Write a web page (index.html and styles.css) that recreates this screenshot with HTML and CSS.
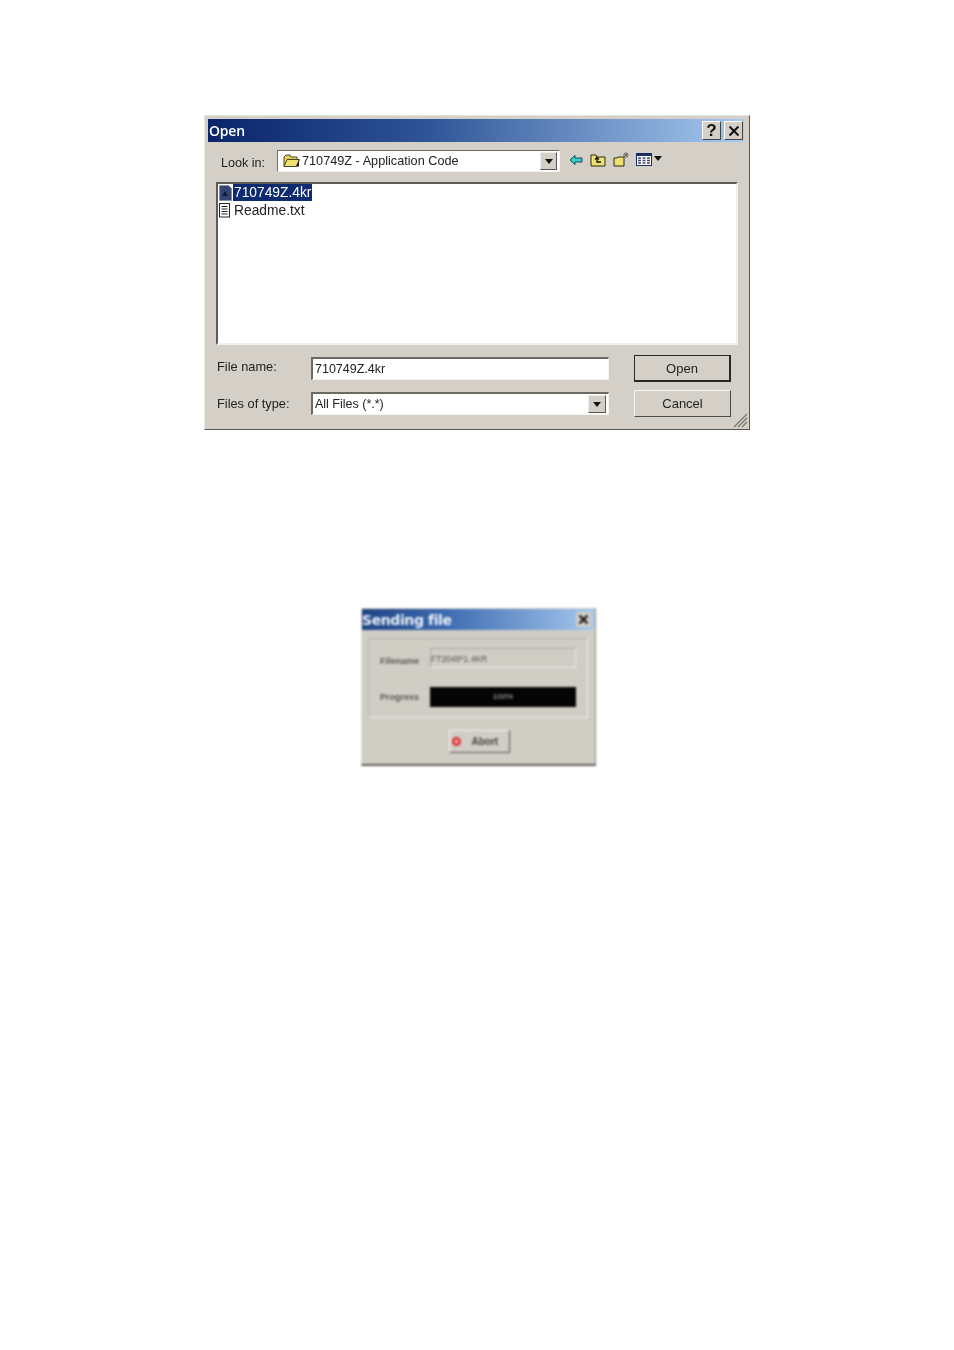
FILE: index.html
```html
<!DOCTYPE html>
<html lang="en">
<head>
<meta charset="utf-8">
<title>Open dialog</title>
<link rel="stylesheet" href="styles.css">
</head>
<body>
<main class="page">
  <section class="open">
    <header class="titlebar">
      <span class="title-text">Open</span>
      <span class="caption-btn q">?</span>
      <span class="caption-btn x"><svg width="12" height="12" viewBox="0 0 12 12"><path d="M1.500 1.500L10.500 10.500M10.500 1.500L1.500 10.500" stroke="#111" stroke-width="2"/></svg></span>
    </header>
    <div class="lookin">
      <span class="look-label">Look in:</span>
      <div class="combo">
        <svg class="folder" width="17" height="14" viewBox="0 0 17 14"><path d="M1 12V3l2-2h4l1 2h6v2" fill="#e2d050" stroke="#4a4630"/><path d="M1 12.500l3-7h12.500l-3 7z" fill="#f0e270" stroke="#4a4630"/><path d="M13 12.500l3-7v7z" fill="#222"/></svg>
        <span class="combo-text">710749Z - Application Code</span>
        <span class="drop"><i class="tri"></i></span>
      </div>
      <div class="tools">
        <svg class="t-back" width="14" height="12" viewBox="0 0 14 12"><path d="M1 6l5-4.500V4h7v4H6v2.500z" fill="#35d2c8" stroke="#0c3a4a" stroke-width=".9"/></svg>
        <svg class="t-up" width="16" height="14" viewBox="0 0 16 14"><path d="M1 13V2h5l1 2h8v9z" fill="#eee070" stroke="#2c2a14"/><path d="M5 6.500l2-2 2 2M7 5v4h4" fill="none" stroke="#111" stroke-width="1.300"/></svg>
        <svg class="t-new" width="17" height="15" viewBox="0 0 17 15"><path d="M1 14V6h3l1-1h6v9z" fill="#eee070" stroke="#2c2a14"/><path d="M13 0v6M10 3h6M11 1l4 4M15 1l-4 4" stroke="#6c6a60"/></svg>
        <svg class="t-view" width="16" height="13" viewBox="0 0 16 13"><rect x=".5" y=".5" width="15" height="12" fill="#fff" stroke="#1c2c60"/><rect x="1" y="1" width="14" height="2" fill="#1c2c60"/><path d="M2 5h3M2 7.500h3M2 10h3M6.500 5h3M6.500 7.500h3M6.500 10h3M11 5h3M11 7.500h3M11 10h3" stroke="#3c4468" stroke-width="1.400"/></svg>
        <i class="tri view-tri"></i>
      </div>
    </div>
    <div class="filelist">
      <div class="file">
        <svg width="15" height="16" viewBox="0 0 15 16"><path d="M1.500 .5h9l3 3v12h-12z" fill="#33446e" stroke="#8890a8"/><path d="M4 11l3-5 3 5z" fill="#0c1a3c"/></svg>
        <span class="file-name selected">710749Z.4kr</span>
      </div>
      <div class="file">
        <svg width="15" height="16" viewBox="0 0 15 16"><rect x="1.500" y="1.500" width="10" height="13.500" fill="#fff" stroke="#222"/><path d="M3.500 4.500h6M3.500 7h6M3.500 9.500h6M3.500 12h6" stroke="#222"/></svg>
        <span class="file-name">Readme.txt</span>
      </div>
    </div>
    <div class="form">
      <span class="form-label first">File name:</span>
      <div class="field first-field">710749Z.4kr</div>
      <button class="btn default" type="button">Open</button>
      <span class="form-label">Files of type:</span>
      <div class="field type-field"><span>All Files (*.*)</span><span class="drop small"><i class="tri"></i></span></div>
      <button class="btn" type="button">Cancel</button>
    </div>
    <svg class="grip" width="16" height="16" viewBox="0 0 16 16"><path d="M15 2L2 15M15 6L6 15M15 10L10 15" stroke="#77746a" stroke-width="1.200"/></svg>
  </section>

  <section class="send">
    <header class="send-title">
      <span class="send-title-text">Sending file</span>
      <span class="send-close"><svg width="11" height="11" viewBox="0 0 11 11"><path d="M1.500 1.500l8 8M9.500 1.500l-8 8" stroke="#111" stroke-width="2.200"/></svg></span>
    </header>
    <div class="group">
      <div class="g-row">
        <span class="g-label low">Filename</span>
        <div class="g-field">FT2048*1.4KR</div>
      </div>
      <div class="g-row second">
        <span class="g-label">Progress</span>
        <div class="g-bar">100%</div>
      </div>
    </div>
    <div class="abort-row">
      <button class="abort" type="button"><i class="stop"><svg width="9" height="9" viewBox="0 0 9 9"><circle cx="4.500" cy="4.500" r="4.500" fill="#e23030"/><path d="M3 3l3 3M3 6l3-3" stroke="#f4e0e0" stroke-width="1.200"/></svg></i><span>Abort</span></button>
    </div>
  </section>
</main>
</body>
</html>
```
FILE: styles.css
```css
* { box-sizing: border-box; }
html, body { margin: 0; background: #fff; }
body { font-family: "Liberation Sans", Arial, sans-serif; color: #222; }
.page { height: 1350px; overflow: hidden; padding-top: 115px; }

.open {
  position: relative;
  width: 546px;
  height: 315px;
  margin-left: 204px;
  padding: 3px 5px 0 3px;
  background: #d4d0c8;
  border-top: 1px solid #e6e4de;
  border-left: 1px solid #e6e4de;
  border-right: 1px solid #55534e;
  border-bottom: 1px solid #55534e;
  filter: blur(.4px);
}
.titlebar {
  display: flex;
  align-items: center;
  height: 23px;
  padding-right: 1px;
  background: linear-gradient(90deg, #0a246a 0%, #2e5396 40%, #a6caf0 100%);
}
.title-text { flex: 1; padding-left: 1px; color: #fff; font: 600 14px "Open Sans", sans-serif; letter-spacing: -.2px; }
.caption-btn {
  display: flex;
  align-items: center;
  justify-content: center;
  width: 19px;
  height: 19px;
  background: #d4d0c8;
  border: 1px solid;
  border-color: #fff #444 #444 #fff;
}
.q { margin-right: 3px; font: bold 17px "Liberation Sans", sans-serif; color: #111; }

.lookin { display: flex; align-items: center; height: 22px; margin-top: 8px; padding-left: 13px; }
.look-label { width: 56px; font-size: 12.600px; padding-top: 4px; }
.combo {
  display: flex;
  align-items: center;
  width: 283px;
  height: 22px;
  padding: 0 2px 0 5px;
  background: #fff;
  border: 1px solid;
  border-color: #6b6962 #f4f3ef #f4f3ef #6b6962;
}
.folder { margin-right: 2px; flex: none; }
.combo-text { flex: 1; font-size: 12.700px; line-height: 18px; white-space: nowrap; }
.drop {
  display: flex;
  align-items: center;
  justify-content: center;
  flex: none;
  width: 17px;
  height: 18px;
  background: #d4d0c8;
  border: 1px solid;
  border-color: #eee #555 #555 #eee;
}
.tri { display: block; width: 0; height: 0; border-style: solid; border-width: 5px 4.500px 0; border-color: #111 transparent transparent; }
.tools { display: flex; align-items: center; margin-left: 9px; margin-top: -3px; }
.t-back { margin-right: 7px; }
.t-up { margin-right: 7px; }
.t-new { margin-right: 6px; }
.t-view { margin-right: 2px; }
.view-tri { margin-top: -3px; border-width: 5px 4px 0; }

.filelist {
  width: 522px;
  height: 163px;
  margin: 10px 0 0 8px;
  padding: 0;
  background: #fff;
  border: 2px solid;
  border-color: #5e5c57 #f1f0ec #f1f0ec #5e5c57;
}
.file { display: flex; align-items: center; height: 17.500px; }
.file svg { flex: none; }
.file-name { font-size: 13.800px; padding: 0 1px; line-height: 17px; }
.selected { background: #0e2a70; color: #fff; }

.form {
  display: grid;
  grid-template-columns: 94px 298px 97px;
  grid-template-rows: 27px 27px;
  row-gap: 8px;
  margin: 10px 0 0 9px;
  align-items: center;
}
.form-label { font-size: 12.800px; }
.first { margin-top: -4px; }
.field {
  width: 298px;
  height: 23px;
  padding: 0 2px 0 2px;
  font-size: 12.500px;
  line-height: 20px;
  background: #fff;
  border: 1px solid;
  border-color: #6b6962 #f4f3ef #f4f3ef #6b6962;
  border-width: 2px 1px 1px 2px;
}
.type-field { display: flex; align-items: center; justify-content: space-between; }
.small { width: 18px; height: 18px; }
.btn {
  width: 97px;
  height: 27px;
  margin-left: 25px;
  padding: 0;
  background: #d4d0c8;
  font: 13px "Liberation Sans", sans-serif;
  color: #222;
  border: 1px solid;
  border-color: #f5f4f0 #4d4b46 #4d4b46 #f5f4f0;
}
.default { border: 2px solid #2a2926; border-top-width: 1px; border-left-width: 1px; outline: 0; }
.grip { position: absolute; right: 1px; bottom: 1px; }

.send {
  width: 235px;
  height: 158px;
  margin: 178px 0 0 361px;
  padding: 1px 1px 0 0;
  background: #d0cdc5;
  border-bottom: 2px solid #5d5c58;
  border-right: 1px solid #8c8a85;
  border-left: 1px solid #e0dfda;
  filter: blur(.9px);
}
.send-title {
  display: flex;
  align-items: center;
  justify-content: space-between;
  height: 21px;
  padding-right: 3px;
  background: linear-gradient(90deg, #1f4484 0%, #3c6ab0 35%, #a6c8ee 100%);
}
.send-title-text { color: #eef2f8; font: bold 14px "DejaVu Sans", sans-serif; letter-spacing: -.4px; }
.send-close {
  display: flex;
  align-items: center;
  justify-content: center;
  width: 15px;
  height: 15px;
  background: #d0cdc5;
}
.group {
  width: 220px;
  height: 80px;
  margin: 8px 0 0 6px;
  padding: 9px 11px 0 11px;
  border: 1px solid;
  border-color: #b4b2ac #eeece8 #eeece8 #b4b2ac;
}
.g-row { display: flex; align-items: center; height: 20px; }
.second { margin-top: 19px; }
.g-label { width: 50px; font-size: 9px; font-weight: bold; color: #5a5a5a; }
.low { padding-top: 5px; }
.g-field {
  width: 146px;
  height: 20px;
  font-size: 8.500px;
  line-height: 20px;
  color: #555;
  border: 1px solid;
  border-color: #aaa8a2 #ebe9e4 #ebe9e4 #aaa8a2;
}
.g-bar {
  width: 146px;
  height: 20px;
  background: #050505;
  color: #bbb;
  font-size: 8px;
  line-height: 20px;
  text-align: center;
}
.abort-row { display: flex; justify-content: center; padding: 12px 0 0 2px; }
.abort {
  display: flex;
  align-items: center;
  width: 61px;
  height: 23px;
  padding: 0 0 0 2px;
  background: #d0cdc5;
  font: bold 10px "Liberation Sans", sans-serif;
  color: #444;
  border: 1px solid;
  border-color: #f4f3ef #555 #555 #f4f3ef;
}
.stop { display: block; width: 9px; height: 9px; margin-right: 11px; line-height: 0; }
```
